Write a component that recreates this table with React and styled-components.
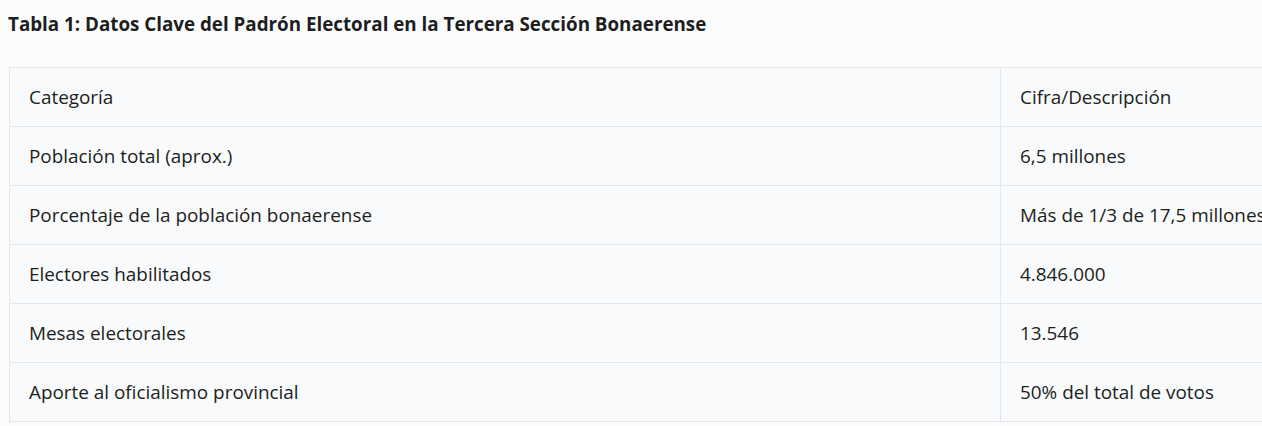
import styled, { createGlobalStyle } from 'styled-components'

const GlobalStyle = createGlobalStyle`
  html, body {
    margin: 0;
    padding: 0;
    background: #fcfcfd;
    overflow: hidden;
  }
  body {
    font-family: "Open Sans", "Noto Sans", sans-serif;
    color: #1c1e21;
  }
`

const rows = [
  ['Categoría', 'Cifra/Descripción'],
  ['Población total (aprox.)', '6,5 millones'],
  ['Porcentaje de la población bonaerense', 'Más de 1/3 de 17,5 millones'],
  ['Electores habilitados', '4.846.000'],
  ['Mesas electorales', '13.546'],
  ['Aporte al oficialismo provincial', '50% del total de votos'],
]

function App() {
  return (
    <PageStyled>
      <GlobalStyle />
      <Title>Tabla 1: Datos Clave del Padrón Electoral en la Tercera Sección Bonaerense</Title>
      <Table>
        <tbody>
          {rows.map((r, i) => (
            <tr key={i}>
              <Cell $first>{r[0]}</Cell>
              <Cell>{r[1]}</Cell>
            </tr>
          ))}
        </tbody>
      </Table>
    </PageStyled>
  );
}

const PageStyled = styled.div`
  padding: 10px 0 0 9px;
  width: 1400px;
`

const Title = styled.h3`
  margin: 0 0 0 -1px;
  font-size: 18.8px;
  font-weight: 700;
  line-height: 29px;
`

const Table = styled.table`
  margin-top: 28px;
  border-collapse: collapse;
  background: #f9fafb;
  font-size: 18.9px;
`

const Cell = styled.td`
  box-sizing: border-box;
  height: 59px;
  padding: 0 20px 0 19px;
  border: 1px solid #e3e6ea;
  width: ${p => (p.$first ? '991px' : '300px')};
  white-space: nowrap;
  vertical-align: middle;
`

export default App;
